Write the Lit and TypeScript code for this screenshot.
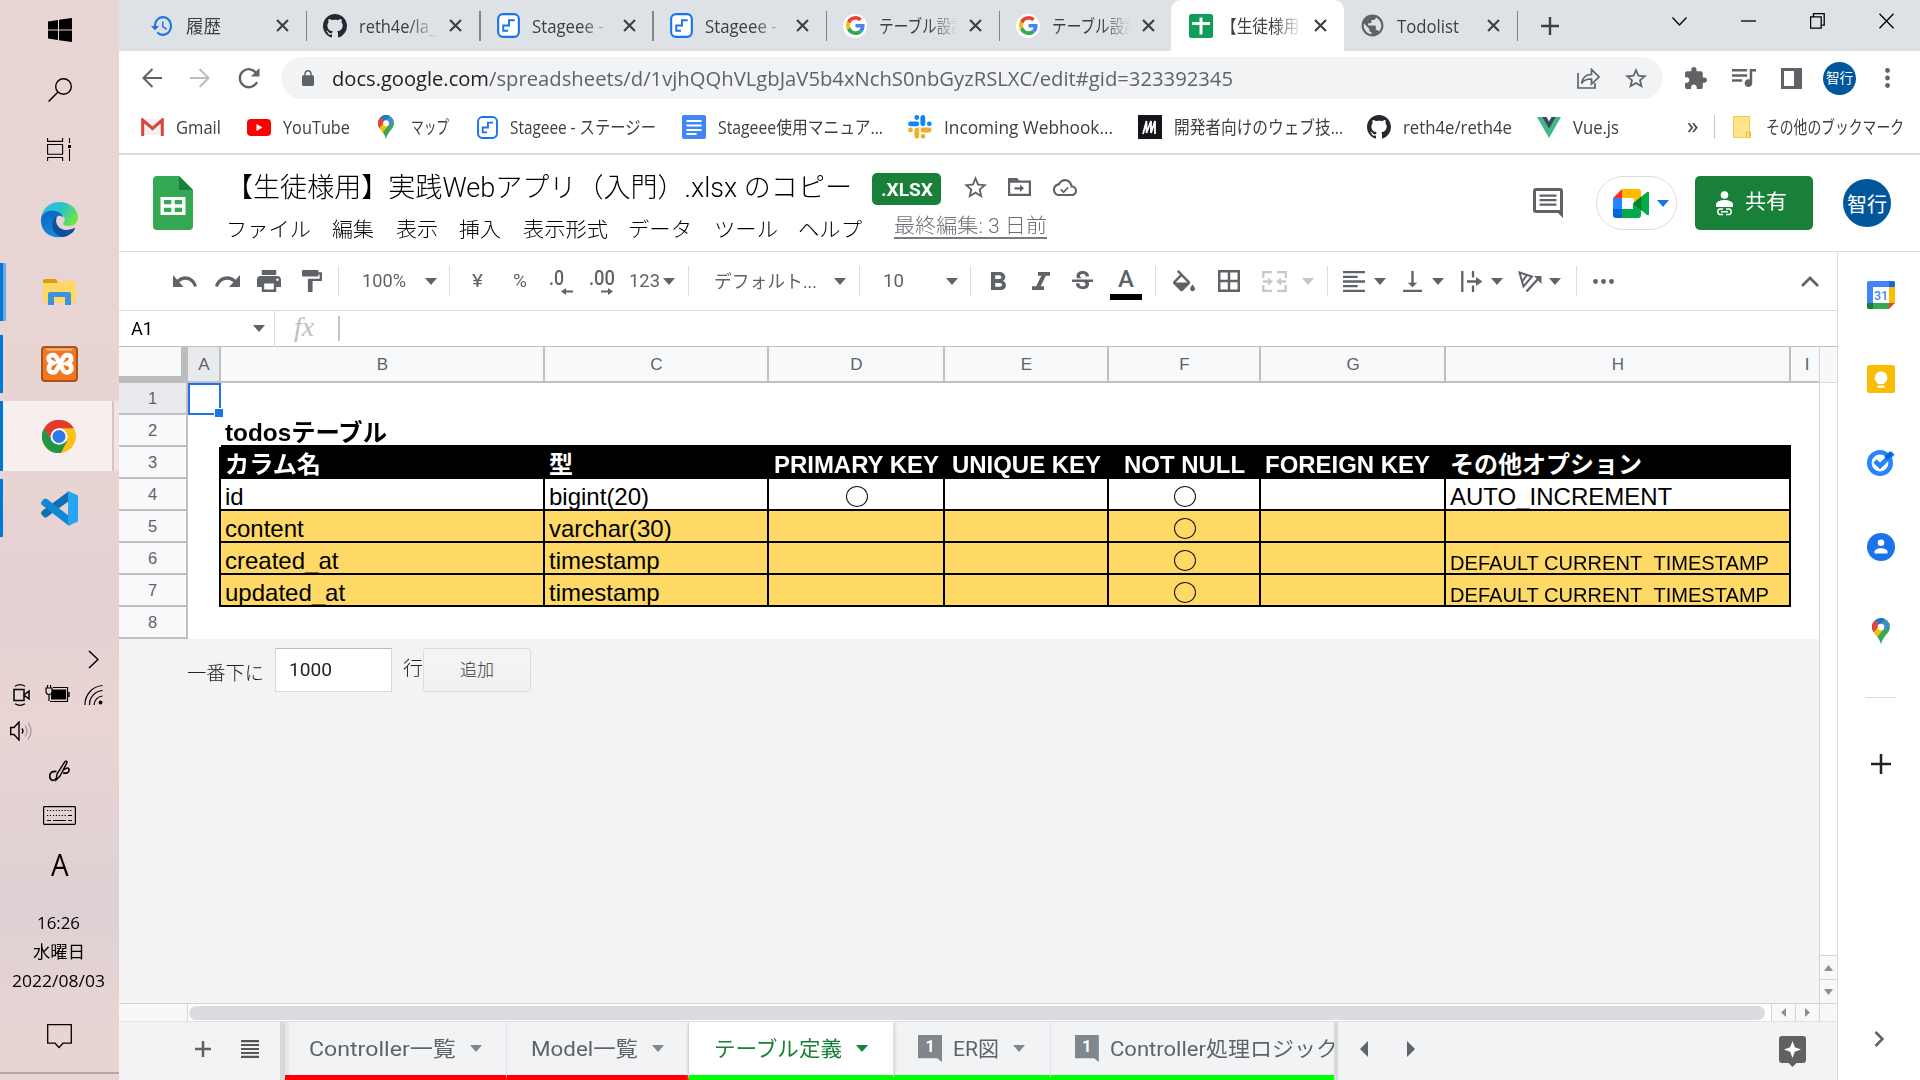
import { LitElement, html, css, nothing } from "lit";
import { customElement, property } from "lit/decorators.js";
import { styleMap } from "lit/directives/style-map.js";
import { unsafeSVG } from "lit/directives/unsafe-svg.js";

/* Text that is condensed or widened to occupy exactly `w` pixels. */
@customElement("fit-text")
class FitText extends LitElement {
  @property({ type: Number }) w = 0;
  static styles = css`
    :host { display: inline-block; white-space: pre; }
    .t { display: inline-block; transform-origin: 0 50%; }
  `;
  render() {
    return html`<span class="t"><slot></slot></span>`;
  }
  firstUpdated() {
    const t = this.renderRoot.querySelector(".t") as HTMLElement;
    const n = t.offsetWidth ? t.getBoundingClientRect().width : 0;
    if (this.w && n) {
      this.style.width = this.w + "px";
      t.style.transform = `scaleX(${this.w / n})`;
    }
  }
}

const fit = (w: number, text: string, cls = "") => html`<fit-text .w=${w} class=${cls}>${text}</fit-text>`;

const icon = (w: number, h: number, box: string, body: string, cls = "") =>
  html`<svg class=${"i " + cls} width=${w} height=${h} viewBox=${box} preserveAspectRatio="none">${unsafeSVG(body)}</svg>`;
const path = (w: number, h: number, box: string, d: string, cls = "") => icon(w, h, box, `<path d="${d}"/>`, cls);

type Item = [number, unknown, string?];

/* Flow items along one axis; each slot reaches up to where the next one starts. */
const flow = (start: number, items: Item[], axis: "width" | "height" = "width") => html`
  <div class="slot" style=${styleMap({ [axis]: items[0][0] - start + "px" })}></div>
  ${items.map(([at, body, cls], n) => html`<div class=${"slot " + (cls ?? "")}
    style=${n + 1 < items.length ? styleMap({ [axis]: items[n + 1][0] - at + "px" }) : nothing}>${body}</div>`)}
`;

const P = {
  undo: "M12.5 8c-2.65 0-5.05.99-6.9 2.6L2 7v9h9l-3.62-3.62c1.39-1.16 3.16-1.88 5.12-1.88 3.54 0 6.55 2.31 7.6 5.5l2.37-.78C21.08 11.03 17.15 8 12.5 8z",
  redo: "M18.4 10.6C16.55 8.99 14.15 8 11.5 8c-4.65 0-8.58 3.03-9.96 7.22L3.9 16c1.05-3.19 4.05-5.5 7.6-5.5 1.95 0 3.73.72 5.12 1.88L13 16h9V7l-3.6 3.6z",
  print: "M19 8H5c-1.66 0-3 1.34-3 3v6h4v4h12v-4h4v-6c0-1.66-1.34-3-3-3zm-3 11H8v-5h8v5zm3-7c-.55 0-1-.45-1-1s.45-1 1-1 1 .45 1 1-.45 1-1 1zm-1-9H6v4h12V3z",
  paint: "M18 4V3c0-.55-.45-1-1-1H5c-.55 0-1 .45-1 1v4c0 .55.45 1 1 1h12c.55 0 1-.45 1-1V6h1v4H9v11c0 .55.45 1 1 1h2c.55 0 1-.45 1-1v-9h8V4h-3z",
  bold: "M15.6 10.79c.97-.67 1.65-1.77 1.65-2.79 0-2.26-1.75-4-4-4H7v14h7.04c2.09 0 3.71-1.7 3.71-3.79 0-1.52-.86-2.82-2.15-3.42zM10 6.5h3c.83 0 1.5.67 1.5 1.5s-.67 1.5-1.5 1.5h-3v-3zm3.5 9H10v-3h3.5c.83 0 1.5.67 1.5 1.5s-.67 1.5-1.5 1.5z",
  italic: "M10 4v3h2.21l-3.42 8H6v3h8v-3h-2.21l3.42-8H18V4z",
  strike: "M7.24 8.75c-.26-.48-.39-1.03-.39-1.67 0-.61.13-1.16.4-1.67.26-.5.63-.93 1.11-1.29.48-.35 1.05-.63 1.7-.83.66-.19 1.39-.29 2.18-.29.81 0 1.54.11 2.21.34.66.22 1.23.54 1.69.94.47.4.83.88 1.08 1.43s.38 1.15.38 1.81h-3.01c0-.31-.05-.59-.15-.85-.09-.27-.24-.49-.44-.68-.2-.19-.45-.33-.75-.44-.3-.1-.66-.16-1.06-.16-.39 0-.74.04-1.03.13s-.53.21-.72.36c-.19.16-.34.34-.44.55-.1.21-.15.43-.15.66 0 .48.25.88.74 1.21.38.25.77.48 1.41.7H7.39c-.05-.08-.11-.17-.15-.25zM21 12v-2H3v2h9.62c.18.07.4.14.55.2.37.17.66.34.87.51s.35.36.43.57c.07.2.11.43.11.69 0 .23-.05.45-.14.66-.09.2-.23.38-.42.53-.19.15-.42.26-.71.35-.29.08-.63.13-1.01.13-.43 0-.83-.04-1.18-.13s-.66-.23-.91-.42c-.25-.19-.45-.44-.59-.75s-.25-.76-.25-1.21H6.4c0 .55.08 1.13.24 1.58s.37.85.65 1.21c.28.35.6.66.98.92.37.26.78.48 1.22.65.44.17.9.3 1.38.39.48.08.96.13 1.44.13.8 0 1.53-.09 2.18-.28s1.21-.45 1.67-.79c.46-.34.82-.77 1.07-1.27s.38-1.07.38-1.71c0-.6-.1-1.14-.31-1.61-.05-.11-.11-.23-.17-.33H21V12z",
  fill: "M16.56 8.94L7.62 0 6.21 1.41l2.38 2.38-5.15 5.15c-.59.59-.59 1.54 0 2.12l5.5 5.5c.29.29.68.44 1.06.44s.77-.15 1.06-.44l5.5-5.5c.59-.58.59-1.53 0-2.12zM5.2 10L10 5.2 14.8 10zM19 11.5s-2 2.17-2 3.5c0 1.1.9 2 2 2s2-.9 2-2c0-1.33-2-3.5-2-3.5z",
  borders: "M3 3v18h18V3H3zm8 16H5v-6h6v6zm0-8H5V5h6v6zm8 8h-6v-6h6v6zm0-8h-6V5h6v6z",
  left: "M15 15H3v2h12v-2zm0-8H3v2h12V7zM3 13h18v-2H3v2zm0 8h18v-2H3v2zM3 3v2h18V3H3z",
  bottom: "M16 13h-3V3h-2v10H8l4 4 4-4zM4 19v2h16v-2H4z",
  star: "M22 9.24l-7.19-.62L12 2 9.19 8.63 2 9.24l5.46 4.73L5.82 21 12 17.27 18.18 21l-1.63-7.03L22 9.24zM12 15.4l-3.76 2.27 1-4.28-3.32-2.88 4.38-.38L12 6.1l1.71 4.04 4.38.38-3.32 2.88 1 4.28L12 15.4z",
  puzzle: "M20.5 11H19V7c0-1.1-.9-2-2-2h-4V3.5C13 2.12 11.88 1 10.5 1S8 2.12 8 3.5V5H4c-1.1 0-1.99.9-1.99 2v3.8H3.5c1.49 0 2.7 1.21 2.7 2.7s-1.21 2.7-2.7 2.7H2V20c0 1.1.9 2 2 2h3.8v-1.5c0-1.49 1.21-2.7 2.7-2.7 1.49 0 2.7 1.21 2.7 2.7V22H17c1.1 0 2-.9 2-2v-4h1.5c1.38 0 2.5-1.12 2.5-2.5S21.88 11 20.5 11z",
  queue: "M15 6H3v2h12V6zm0 4H3v2h12v-2zM3 16h8v-2H3v2zM17 6v8.18c-.31-.11-.65-.18-1-.18-1.66 0-3 1.34-3 3s1.34 3 3 3 3-1.34 3-3V8h3V6h-5z",
  lock: "M18 8h-1V6c0-2.76-2.24-5-5-5S7 3.24 7 6v2H6c-1.1 0-2 .9-2 2v10c0 1.1.9 2 2 2h12c1.1 0 2-.9 2-2V10c0-1.1-.9-2-2-2zM15 8H9V6c0-1.7 1.3-3 3-3s3 1.3 3 3z",
  globe: "M12 2C6.48 2 2 6.48 2 12s4.48 10 10 10 10-4.48 10-10S17.52 2 12 2zm-1 17.93c-3.95-.49-7-3.85-7-7.93 0-.62.08-1.21.21-1.79L9 15v1c0 1.1.9 2 2 2v1.93zm6.9-2.54c-.26-.81-1-1.39-1.9-1.39h-1v-3c0-.55-.45-1-1-1H8v-2h2c.55 0 1-.45 1-1V7h2c1.1 0 2-.9 2-2v-.41c2.93 1.19 5 4.06 5 7.41 0 2.08-.8 3.97-2.1 5.39z",
  github: "M8 0C3.58 0 0 3.58 0 8c0 3.54 2.29 6.53 5.47 7.59.4.07.55-.17.55-.38 0-.19-.01-.82-.01-1.49-2.01.37-2.53-.49-2.69-.94-.09-.23-.48-.94-.82-1.13-.28-.15-.68-.52-.01-.53.63-.01 1.08.58 1.23.82.72 1.21 1.87.87 2.33.66.07-.52.28-.87.51-1.07-1.78-.2-3.64-.89-3.64-3.95 0-.87.31-1.59.82-2.15-.08-.2-.36-1.02.08-2.12 0 0 .67-.21 2.2.82.64-.18 1.32-.27 2-.27.68 0 1.36.09 2 .27 1.53-1.04 2.2-.82 2.2-.82.44 1.1.16 1.92.08 2.12.51.56.82 1.27.82 2.15 0 3.07-1.87 3.75-3.65 3.95.29.25.54.73.54 1.48 0 1.07-.01 1.93-.01 2.2 0 .21.15.46.55.38A8.013 8.013 0 0016 8c0-4.42-3.58-8-8-8z",
  history: "M13 3c-4.97 0-9 4.03-9 9H1l3.89 3.89.07.14L9 12H6c0-3.87 3.13-7 7-7s7 3.13 7 7-3.13 7-7 7c-1.93 0-3.68-.79-4.94-2.06l-1.42 1.42C8.27 19.99 10.51 21 13 21c4.97 0 9-4.03 9-9s-4.03-9-9-9zm-1 5v5l4.28 2.54.72-1.21-3.5-2.08V8H12z",
  cloud: "M19.35 10.04C18.67 6.59 15.64 4 12 4 9.11 4 6.6 5.64 5.35 8.04 2.34 8.36 0 10.91 0 14c0 3.31 2.69 6 6 6h13c2.76 0 5-2.24 5-5 0-2.64-2.05-4.78-4.65-4.96zM19 18H6c-2.21 0-4-1.79-4-4 0-2.05 1.53-3.76 3.56-3.97l1.07-.11.5-.95C8.08 7.14 9.94 6 12 6c2.62 0 4.88 1.86 5.39 4.43l.3 1.5 1.53.11c1.56.1 2.78 1.41 2.78 2.96 0 1.65-1.35 3-3 3zm-8.5-2.6l-2.2-2.2-1.1 1.1 3.3 3.3 5.2-5.2-1.1-1.1z",
};

const caret = (cls = "") => path(12, 7, "0 0 12 7", "M0 0h12L6 7z", cls);
const cross = () => icon(13, 13, "0 0 13 13", `<path d="M1 1l11 11M12 1L1 12" stroke="#3c4043" stroke-width="2.2" fill="none"/>`);
const sep = (cls = "") => html`<div class=${"sep " + cls}></div>`;
const githubMark = () => path(24, 24, "0 0 16 16", P.github, "ink");
const stageee = (s: number) => icon(s, s + 2, "0 0 24 26", `<rect x="1.2" y="1.2" width="21.600" height="23.600" rx="5" fill="#fff" stroke="#1a73e8" stroke-width="2.200"/><path d="M11.500 18.500H6.500V13h6V7.500h6" fill="none" stroke="#1a73e8" stroke-width="2"/>`);
const googleG = () => html`<span class="disc">${icon(19, 19, "0 0 48 48", `<path fill="#EA4335" d="M24 9.5c3.54 0 6.71 1.22 9.21 3.6l6.85-6.85C35.9 2.38 30.47 0 24 0 14.62 0 6.51 5.38 2.56 13.22l7.98 6.19C12.43 13.72 17.74 9.5 24 9.5z"/><path fill="#4285F4" d="M46.98 24.55c0-1.57-.15-3.09-.38-4.55H24v9.02h12.94c-.58 2.96-2.26 5.48-4.78 7.18l7.73 6c4.51-4.18 7.09-10.36 7.09-17.65z"/><path fill="#FBBC05" d="M10.53 28.59c-.48-1.45-.76-2.99-.76-4.59s.27-3.14.76-4.59l-7.98-6.19C.92 16.46 0 20.12 0 24c0 3.88.92 7.54 2.56 10.78l7.97-6.19z"/><path fill="#34A853" d="M24 48c6.48 0 11.93-2.13 15.89-5.81l-7.73-6c-2.15 1.45-4.92 2.3-8.16 2.3-6.26 0-11.57-4.22-13.47-9.91l-7.98 6.19C6.51 42.62 14.62 48 24 48z"/>`)}</span>`;
const mapPin = (w: number, h: number, id: string) => icon(w, h, "0 0 18 26", `<clipPath id="${id}"><path d="M9 0a9 9 0 0 0-9 9c0 6 6.500 8 9 17C11.500 17 18 15 18 9a9 9 0 0 0-9-9z"/></clipPath><g clip-path="url(#${id})"><rect width="18" height="26" fill="#34a853"/><path d="M0 16L18-5v-4H0z" fill="#1a73e8"/><path d="M9 9l10-12v8l-7 8z" fill="#4285f4"/><path d="M-1 3l4-1 5 5-8 9z" fill="#ea4335"/><path d="M1 15l7-8 4 4-8 9.500z" fill="#fbbc04"/></g><circle cx="9" cy="9" r="3.300" fill="#fff"/>`);

@customElement("task-bar")
class TaskBar extends LitElement {
  static styles = css`
    :host { display: flex; flex: none; flex-direction: column; width: 119px; height: 1080px; box-sizing: border-box;
      background: linear-gradient(180deg, #ead5d5 0%, #e9d4d4 45%, #e5d1d2 55%, #ead4d4 67%, #ddd1d3 84%, #e9d4d4 95%);
      font-family: "Open Sans", "Noto Sans CJK JP", sans-serif; font-size: 17px; color: #000; }
    .slot { flex: none; display: flex; align-items: flex-start; justify-content: center; width: 119px; }
    .i { display: block; flex: none; }
    .app { position: relative; display: flex; align-items: center; justify-content: center; width: 119px; height: 58px; }
    .on::before { content: ""; position: absolute; left: 0; top: 0; bottom: 0; width: 3px; background: #0078d7; }
    .multi::before { border-right: 3px solid #6cabe0; }
    .active { height: 70px; justify-content: flex-start; background: linear-gradient(90deg, #f7efee 112px, #d9c3c4 112px, #d9c3c4 114px, #f0e4e4 114px); box-sizing: border-box; padding-left: 42px; }
    .end { justify-content: flex-end; padding-right: 20px; box-sizing: border-box; }
    .tray { justify-content: flex-start; padding-left: 13px; gap: 14px; box-sizing: border-box; }
    .start { justify-content: flex-start; padding-left: 10px; box-sizing: border-box; }
    .mode { font-size: 31px; line-height: 38px; font-family: "Open Sans", sans-serif; transform: scaleX(0.9); }
    .foot { border-top: 2px solid #b3a5a7; align-self: stretch; flex: 1; }
    fit-text { line-height: 26px; font-weight: 400; margin-right: 2px; }
  `;
  render() {
    return flow(0, [
      [18, path(24, 24, "0 0 24 24", "M0 3.500L10 2v9.500H0zM11 1.800L24 0v11.500H11zM0 12.500h10V22L0 20.500zM11 12.500h13V24l-13-1.800z")],
      [78, icon(24, 24, "0 0 24 24", `<circle cx="15.500" cy="8.500" r="7.800" fill="none" stroke="#000" stroke-width="1.400"/><path d="M10 14L.6 23.500" stroke="#000" stroke-width="1.500"/>`)],
      [138, icon(25, 23, "0 0 25 23", `<path d="M.6 0v3.400h15V0M.6 6.500h15v9.800H.6zM.6 23v-3.500h15V23M22.500 0v5M22.500 11v12" fill="none" stroke="#000" stroke-width="1.100"/><rect x="21" y="7" width="3" height="3"/>`)],
      [202, icon(37, 36, "0 0 36 36", `<defs><linearGradient id="eg" x1="0" y1="0" x2="1" y2=".5"><stop offset="0" stop-color="#2fb4f0"/><stop offset=".55" stop-color="#2cc3c8"/><stop offset="1" stop-color="#6fe342"/></linearGradient><linearGradient id="eb" x1="0" y1="0" x2=".3" y2="1"><stop offset="0" stop-color="#0c63b8"/><stop offset="1" stop-color="#1288e0"/></linearGradient></defs><path d="M0 17C1 6 9 0 18 0c10 0 18 7 18 15.500 0 5-4 8.500-9 8.500-4 0-6.500-1.500-5-3.500 3-4 0-7.500-5-7.500C9 13 4 18 6 27 2 24 0 21 0 17z" fill="url(#eg)"/><path d="M0 17c1-6 7-8.500 12-8.200 6 .3 10 4 9.800 8.200C22 14 17 12 14 16c-4 6 0 15 8 18.500C9 38-1 29 0 17z" fill="url(#eb)"/><path d="M11 21c.5-4 2.500-6.500 5-7-4 7 2 14.500 9.500 14 3.500-.2 6-2 7.500-2 1 1.500-5 8.500-11 9C15 35 10 28 11 21z" fill="#0f4f9e"/>`)],
      [263, html`<div class="app on multi">${icon(33, 28, "0 0 33 28", `<path d="M0 3a2 2 0 0 1 2-2h11l2 4H0z" fill="#dd9f06"/><path d="M0 5h15l2-2h14a2 2 0 0 1 2 2v18a2 2 0 0 1-2 2H2a2 2 0 0 1-2-2z" fill="#ffd766"/><path d="M5 27V16a2 2 0 0 1 2-2h19a2 2 0 0 1 2 2v11h-6v-8H11v8z" fill="#3b93dc"/>`)}</div>`],
      [335, html`<div class="app on">${icon(37, 36, "0 0 37 36", `<rect x="1" y="1" width="35" height="34" rx="3" fill="#f37623" stroke="#a95518" stroke-width="2"/><path d="M4 2.500h29l-3 2H7z" fill="#f9b98a"/><path d="M12 17c-6-2-6-8 0-8 5 0 4 7 7 7s2-7 7-7 6 6 0 8.500c7 2 5 9 0 9-6 0-4-7-7-7s-2 7-7 7-6-7 0-9.500z" fill="none" stroke="#fff" stroke-width="4.600"/>`)}</div>`],
      [401, html`<div class="app on active">${icon(34, 33, "0 0 34 34", `<circle cx="17" cy="17" r="17" fill="#fbc116"/><path d="M17 17L2.200 8.500A17 17 0 0 0 19 33.900L25 22z" fill="#269447"/><path d="M2.200 8.500A17 17 0 0 1 31.800 8.500H17l-7.500 12z" fill="#e23b2e"/><circle cx="17" cy="17" r="8.500" fill="#fff"/><circle cx="17" cy="17" r="6.600" fill="#2f78ea"/>`)}</div>`],
      [479, html`<div class="app on">${icon(37, 35, "0 0 37 35", `<path d="M1 20a3 3 0 0 0 0 4l2 2q1.500 1 3 0L28 10V0z" fill="#0f6fb5"/><path d="M1 14a3 3 0 0 1 0-4l2-2q1.500-1 3 0L28 25v10z" fill="#1189d2"/><path d="M27 0l10 4.500v26L27 35z" fill="#25a5f2"/>`)}</div>`],
      [650, icon(11, 19, "0 0 11 19", `<path d="M1 1l9 8.500L1 18" fill="none" stroke="#000" stroke-width="1.500"/>`), "end"],
      [684, html`
        ${icon(18, 22, "0 0 18 22", `<path d="M1 5.500h10v11H1zM11 11l5-4v8z" fill="none" stroke="#000" stroke-width="1.500"/><path d="M2 2.200q5-3 10 0M2 19.800q5 3 10 0" fill="none" stroke="#000" stroke-width="1.300"/>`)}
        ${icon(25, 20, "0 0 25 20", `<rect x="6" y="5.500" width="15" height="10"/><path d="M8 3.500h14.500v14H5" fill="none" stroke="#000" stroke-width="1.200"/><rect x="23.200" y="8" width="1.500" height="5"/><path d="M1 4v3.500a3 3 0 0 0 6 0V4zM2.500 1v3M5.500 1v3M4 10.500V17" fill="#ead5d5" stroke="#000" stroke-width="1.200"/>`)}
        ${icon(19, 22, "0 0 19 22", `<path d="M1 21A19 19 0 0 1 18.500 1.500M5.500 21A14 14 0 0 1 18.500 6.500M10 21A9.500 9.500 0 0 1 18.500 12" fill="none" stroke="#000" stroke-width="1.200"/><circle cx="16.500" cy="18.500" r="1.900"/>`)}`, "tray"],
      [721, icon(22, 20, "0 0 22 20", `<path d="M.7 6.500H4L9 1v18L4 13.500H.7z" fill="none" stroke="#000" stroke-width="1.400"/><path d="M12 7.500q2 2.500 0 5" fill="none" stroke="#000" stroke-width="1.300"/><path d="M15 4.500q4 5.500 0 11M18 1.500q6 8.500 0 17" fill="none" stroke="#a89a9c" stroke-width="1.300"/>`), "start"],
      [760, icon(22, 22, "0 0 22 22", `<path d="M8 18q-4 4-6.500 1c-2-4 0-8.500 6-7.500M14 10q6-4 6 0t-6 3" fill="none" stroke="#000" stroke-width="1.700"/><path d="M7 20l1-6L16 1.500q2-1 2 1L11 16z" fill="#ead5d5" stroke="#000" stroke-width="1.400"/>`)],
      [806, icon(33, 19, "0 0 33 19", `<rect x=".6" y=".6" width="31.800" height="17.800" rx=".8" fill="none" stroke="#000" stroke-width="1.200"/><path d="M4 4.500h25" stroke="#000" stroke-dasharray="1.200 1.700"/><path d="M4 9.500h4M10 9.500h13" stroke="#000" stroke-dasharray="1.200 1.700"/><path d="M25 9.500h4M4 14.500h4M10 14.500h13M25 14.500h4" stroke="#000" stroke-width="1.100"/>`)],
      [845, html`<span class="mode">A</span>`],
      [910, fit(43, "16:26")],
      [939, fit(52, "水曜日")],
      [968, fit(93, "2022/08/03")],
      [1024, icon(25, 25, "0 0 25 25", `<path d="M.7.7h23.600v18.500H16L12 23.500l-4-4.300H.7z" fill="none" stroke="#000" stroke-width="1.300"/>`)],
      [1072, html`<div class="foot"></div>`],
    ], "height");
  }
}

@customElement("browser-chrome")
class BrowserChrome extends LitElement {
  static styles = css`
    :host { display: flex; flex: none; flex-direction: column; height: 155px; box-sizing: border-box; border-bottom: 2px solid #dadce0; background: #fff;
      font-family: "Open Sans", "Noto Sans CJK JP", sans-serif; font-size: 18px; color: #3c4043; }
    .slot { flex: none; display: flex; align-items: center; height: 100%; }
    .i { display: block; flex: none; fill: #5f6368; }
    .ink { fill: #24292f; }
    .blue { fill: #1a73e8; }
    .tabs { display: flex; height: 51px; background: #dee1e6; }
    .tab { display: flex; align-items: center; flex: none; box-sizing: border-box; width: 173.300px; height: 51px; padding-left: 17px; }
    .fav { width: 35.500px; flex: none; display: flex; }
    .label { width: 78px; margin-right: 12.500px; overflow: hidden; flex: none; line-height: 28px; font-weight: 400; -webkit-mask-image: linear-gradient(90deg, #000 64%, transparent); }
    .plain .label { -webkit-mask-image: none; }
    .line { width: 1.500px; height: 30px; background: #80868b; margin-left: auto; margin-right: -1px; flex: none; }
    .tab.current { background: #fff; border-radius: 10px 10px 0 0; margin-left: -2px; padding-left: 18px; }
    .tab.current .fav { width: 32px; }
    .tab.current .label { width: 81px; }
    .first { margin-left: 14px; }
    .disc { display: flex; width: 24px; height: 24px; border-radius: 50%; background: #fff; align-items: center; justify-content: center; }
    .win { height: 42px; }
    .bar { display: flex; height: 54px; align-items: center; }
    .omni { display: flex; align-items: center; width: 1382px; height: 42px; border-radius: 21px; background: #f1f3f4; }
    .url { font-size: 20.500px; line-height: 30px; color: #5f6368; }
    .host { color: #202124; }
    .avatar { display: flex; align-items: center; justify-content: center; width: 33px; height: 33px; border-radius: 50%; background: #01579b; color: #fff; font-size: 13.500px; line-height: 20px; }
    .marks { display: flex; height: 40px; margin-top: 2px; }
    .marks fit-text { line-height: 28px; }
    .sep { width: 1px; height: 24px; background: #c4c7cc; }
    .more { font-size: 23px; line-height: 28px; padding-bottom: 5px; }
  `;
  tab(fav: unknown, label: unknown, cls = "", line = true) {
    return html`<div class=${"tab " + cls}><div class="fav">${fav}</div><div class="label">${label}</div>${cross()}${line ? html`<div class="line"></div>` : nothing}</div>`;
  }
  render() {
    const stroke = (w: number, h: number, d: string, s = 1.3, c = "#000") => icon(w, h, `0 0 ${w} ${h}`, `<path d="${d}" fill="none" stroke="${c}" stroke-width="${s}"/>`);
    return html`
      <div class="tabs">
        ${this.tab(path(23, 22, "0 2 23 20", P.history, "blue"), fit(35, "履歴"), "first")}
        ${this.tab(githubMark(), fit(77, "reth4e/la_"))}
        ${this.tab(stageee(23), fit(76, "Stageee - "))}
        ${this.tab(stageee(23), fit(76, "Stageee - "))}
        ${this.tab(googleG(), fit(87, "テーブル設計"))}
        ${this.tab(googleG(), fit(87, "テーブル設計"), "", false)}
        ${this.tab(icon(24, 24, "0 0 24 24", `<rect width="24" height="24" rx="2.500" fill="#0f9d58"/><path d="M3 9.500h18M12 3.500v17" stroke="#fff" stroke-width="3"/>`), fit(94, "【生徒様用】"), "current", false)}
        ${this.tab(path(23, 23, "1.5 1.5 21 21", P.globe), fit(62, "Todolist"), "plain")}
        ${flow(1517.4, [
          [1541, stroke(18, 18, "M9 0v18M0 9h18", 2.4, "#3c4043")],
          [1672, stroke(15, 9, "M.5.5l7 7.500 7-7.500"), "win"],
          [1741, stroke(15, 2, "M0 1h15"), "win"],
          [1810, stroke(15, 16, "M.6 3.800h10.600v11.400H.6zM3.500 3.800V.7h10.700v11.400h-3"), "win"],
          [1879, stroke(15, 16, "M.5.8l14 14.500M14.500.8l-14 14.500"), "win"],
        ])}
      </div>
      <div class="bar">
        ${flow(119, [
          [142, stroke(20, 20, "M20 10H2M10.500 1L1.500 10l9 9", 2.1, "#5f6368")],
          [190, stroke(20, 20, "M0 10h18M9.500 1l9 9-9 9", 2.1, "#babcbe")],
          [238, icon(22, 21, "0 0 22 21", `<path d="M18.500 5.500A9 9 0 1 0 19 14" fill="none" stroke="#5f6368" stroke-width="2.300"/><path d="M21.500 0v8.500H13z"/>`)],
          [281, html`<div class="omni">${flow(281, [
            [302, path(12, 16, "4 1 16 21", P.lock)],
            [332, html`<span class="url host">${fit(157, "docs.google.com")}</span><span class="url">${fit(744, "/spreadsheets/d/1vjhQQhVLgbJaV5b4xNchS0nbGyzRSLXC/edit#gid=323392345")}</span>`],
            [1577, stroke(23, 21, "M1 5v15h17v-5M4.500 15.500c1-6 4-9 10-9V1.500L22 9l-7.500 7v-5c-5 0-8 1-10 4.500z", 1.7, "#5f6368")],
            [1625, path(22, 20, "2 2 20 19", P.star)],
          ])}</div>`],
          [1685, path(22, 22, "2 1 21 21", P.puzzle)],
          [1732, path(24, 18, "3 6 19 14", P.queue)],
          [1781, icon(21, 21, "0 0 21 21", `<path d="M0 0h21v21H0zM3 3v15h10V3z" fill-rule="evenodd"/>`)],
          [1823, html`<div class="avatar">智行</div>`],
          [1885, icon(5, 20, "0 0 5 20", `<circle cx="2.500" cy="2.500" r="2.400"/><circle cx="2.500" cy="10" r="2.400"/><circle cx="2.500" cy="17.500" r="2.400"/>`)],
        ])}
      </div>
      <div class="marks">
        ${flow(119, [
          [141, icon(23, 18, "0 0 23 18", `<rect x="1" y="1" width="21" height="16" fill="#f1f1f1"/><path d="M1.700 18V2l9.800 8.500L21.300 2v16" fill="none" stroke="#d9453b" stroke-width="3"/>`)],
          [176, fit(45, "Gmail")],
          [247, icon(24, 17, "0 0 24 17", `<rect width="24" height="17" rx="4" fill="#f00"/><path d="M9.500 5v7l6-3.500z" fill="#fff"/>`)],
          [283, fit(67, "YouTube")],
          [378, mapPin(16, 24, "pinA")],
          [411, fit(38, "マップ")],
          [477, stageee(21)],
          [510, fit(146, "Stageee - ステージー")],
          [682, icon(24, 24, "0 0 24 24", `<rect width="24" height="24" rx="2" fill="#4285f4"/><path d="M4.500 6h15M4.500 10.500h15M4.500 15h15M4.500 19h10" stroke="#fff" stroke-width="2"/>`)],
          [718, fit(165, "Stageee使用マニュア...")],
          [908, icon(24, 24, "0 0 24 24", `<g stroke-width="4.800" stroke-linecap="round"><path d="M8.800 2.500v0M2.500 8.800h6.300M14.800 2.500v6.300M21.300 8.800v0" stroke="#0a84ff"/><path d="M2.500 15v0M8.800 15v6.300M15 15h6.300M15 21.300v0" stroke="#ecb02e"/></g>`)],
          [944, fit(169, "Incoming Webhook...")],
          [1138, icon(24, 24, "0 0 24 24", `<rect width="24" height="24" fill="#15141a"/><path d="M5 19L8.500 6v12L13 6v12l4-12v13" fill="none" stroke="#fff" stroke-width="1.800"/>`)],
          [1174, fit(169, "開発者向けのウェブ技...")],
          [1367, githubMark()],
          [1403, fit(109, "reth4e/reth4e")],
          [1537, icon(24, 21, "0 0 24 21", `<path d="M0 0h5l7 12 7-12h5L12 21z" fill="#41b883"/><path d="M5 0h4.500L12 4.500 14.500 0H19l-7 12z" fill="#35495e"/>`)],
          [1573, fit(46, "Vue.js")],
          [1687, html`<span class="more">»</span>`],
          [1714, sep()],
          [1732, icon(19, 22, "0 0 19 22", `<path d="M1.500.5h16v14l1 1.500v5.500h-17z" fill="#ffe48d" stroke="#f0c948"/><path d="M14.500 21v-5h3v5" fill="#ffe48d" stroke="#edc133"/>`)],
          [1766, fit(138, "その他のブックマーク")],
        ])}
      </div>
    `;
  }
}

const columns: [string, number][] = [["A", 33], ["B", 324], ["C", 224], ["D", 176], ["E", 164], ["F", 152], ["G", 185], ["H", 345]];
const heads = ["カラム名", "型", "PRIMARY KEY", "UNIQUE KEY", "NOT NULL", "FOREIGN KEY", "その他オプション"];
const headWidths = [96, 24, 165, 149, 121, 165, 192];
const body = [
  ["id", "bigint(20)", "○", "", "○", "", "AUTO_INCREMENT"],
  ["content", "varchar(30)", "", "", "○", "", ""],
  ["created_at", "timestamp", "", "", "○", "", "DEFAULT CURRENT_TIMESTAMP"],
  ["updated_at", "timestamp", "", "", "○", "", "DEFAULT CURRENT_TIMESTAMP"],
];

@customElement("sheet-grid")
class SheetGrid extends LitElement {
  static styles = css`
    :host { display: flex; flex: none; flex-direction: column; height: 292px; background: #fff; font-family: "Liberation Sans", "Noto Sans CJK JP", sans-serif; color: #000; }
    .row { display: flex; height: 32px; flex: none; }
    .row > div { box-sizing: border-box; flex: none; }
    .top { height: 36px; }
    .corner { width: 69px; border-right: 7px solid #bdbdbd; border-bottom: 7px solid #bdbdbd; background: #f8f9fa; }
    .col { display: flex; align-items: center; justify-content: center; border-right: 2px solid #c0c0c0; border-bottom: 2px solid #c0c0c0; background: #f8f9fb; color: #5f6368; font-size: 17px; padding-left: 1px; padding-top: 2px; }
    .sel { background: #e8eaed; }
    .row > .lastcol { flex: 1; border-right: 0; padding-left: 4px; }
    .num { width: 69px; display: flex; align-items: center; justify-content: center; border-right: 2px solid #c0c0c0; border-bottom: 2px solid #c0c0c0; background: #f8f9fb; color: #5f6368; font-size: 16.500px; }
    .num.sel { background: #e8eaed; }
    .cell { position: relative; display: flex; align-items: flex-end; font-size: 24px; line-height: 25px; white-space: nowrap; padding-left: 4px; }
    .line { border-bottom: 2px solid #000; }
    .edge { border-right: 2px solid #000; }
    .black { background: #000; color: #fff; font-weight: 700; border-right: 2px solid #000; border-bottom: 2px solid #000; }
    .cream { background: #ffd966; }
    .mid { justify-content: center; padding-left: 1px; }
    .small { font-size: 20.800px; line-height: 20px; }
    .ring { width: 20px; height: 19px; border: 1px solid #111; border-radius: 50%; margin-bottom: 2px; }
    .cursor { position: absolute; left: 0; top: 0; width: 33px; height: 32px; box-sizing: border-box; border: 2px solid #1a73e8; }
    .cursor::after { content: ""; position: absolute; right: -5px; bottom: -5px; width: 8px; height: 8px; background: #1a73e8; border: 1px solid #fff; }
    .bold { font-weight: 700; }
  `;
  widths(n: number) { return styleMap({ width: columns[n][1] + "px" }); }
  render() {
    return html`
      <div class="row top">
        <div class="corner"></div>
        ${columns.map(([name], n) => html`<div class=${"col" + (n ? "" : " sel")} style=${this.widths(n)}>${name}</div>`)}
        <div class="col lastcol">I</div>
      </div>
      ${[1, 2, 3, 4, 5, 6, 7, 8].map((r) => html`
        <div class="row">
          <div class=${"num" + (r === 1 ? " sel" : "")}>${r}</div>
          ${columns.map((_, n) => this.cell(r, n))}
        </div>`)}
    `;
  }
  cell(r: number, n: number) {
    const st = this.widths(n);
    if (n === 0) return html`<div class=${"cell" + (r > 2 && r < 8 ? " edge" : "")} style=${st}>${r === 1 ? html`<div class="cursor"></div>` : nothing}</div>`;
    if (r === 2) return html`<div class="cell line bold" style=${st}>${n === 1 ? fit(162, "todosテーブル") : nothing}</div>`;
    if (r === 3) return html`<div class=${"cell black" + (n > 2 && n < 6 ? " mid" : "")} style=${st}>${fit(headWidths[n - 1], heads[n - 1])}</div>`;
    if (r > 3 && r < 8) {
      const t = body[r - 4][n - 1];
      return html`<div class=${"cell line edge" + (r > 4 ? " cream" : "") + (n > 2 && n < 7 ? " mid" : "") + (t.startsWith("DEF") ? " small" : "")} style=${st}>
        ${t === "○" ? html`<div class="ring"></div>` : t.startsWith("DEF") ? fit(319, t) : html`<span>${t}</span>`}</div>`;
    }
    return html`<div class="cell" style=${st}></div>`;
  }
}

@customElement("app-root")
class AppRoot extends LitElement {
  static styles = css`
    :host { display: flex; width: 1920px; height: 1080px; overflow: hidden; background: #fff; font-family: Roboto, "Noto Sans CJK JP", sans-serif; color: #202124; }
    .slot { flex: none; display: flex; align-items: center; height: 100%; box-sizing: border-box; }
    .i { display: block; flex: none; fill: #5f6368; }
    .main { width: 1801px; flex: none; display: flex; flex-direction: column; }
    .header { height: 97px; flex: none; box-sizing: border-box; display: flex; border-bottom: 1px solid #dadce0; }
    .titles { width: 843px; height: 96px; display: flex; flex-direction: column; }
    .titlerow { display: flex; height: 64px; }
    .menurow { display: flex; height: 22px; }
    .title { font-size: 27px; line-height: 40px; font-weight: 300; color: #000; padding-top: 1px; }
    .menu fit-text { font-size: 20.500px; line-height: 30px; font-weight: 300; color: #000; }
    .menu.edited fit-text { color: #6c7075; line-height: 22px; border-bottom: 2px solid #777b80; margin-bottom: 7px; }
    .badge { display: flex; align-items: center; justify-content: center; width: 69px; height: 32px; border-radius: 5px; background: #188038; color: #fff; font-size: 19px; font-weight: 700; margin-top: 4px; }
    .meet { display: flex; align-items: center; width: 81px; height: 54px; box-sizing: border-box; border: 1px solid #dadce0; border-radius: 27px; padding: 0 8px 0 16px; gap: 8px; }
    .blue { fill: #1a73e8; }
    .share { display: flex; align-items: center; width: 118px; height: 54px; box-sizing: border-box; border-radius: 5px; background: #188038; color: #fff; padding-left: 20px; gap: 11px; font-size: 20.500px; }
    .share fit-text { padding-bottom: 7px; font-weight: 400; }
    .white { fill: #fff; }
    .avatar { display: flex; align-items: center; justify-content: center; width: 48px; height: 48px; border-radius: 50%; background: #01579b; color: #fff; }
    .avatar fit-text { font-size: 20px; }
    .under { display: flex; height: 828px; flex: none; }
    .sheet { width: 1718px; flex: none; display: flex; flex-direction: column; }
    .tools { height: 59px; flex: none; box-sizing: border-box; display: flex; border-bottom: 1px solid #dadce0; color: #5f6368; font-size: 18px; }
    .tools .slot > fit-text { padding-bottom: 2px; }
    .sep { width: 1px; height: 30px; background: #dadce0; }
    .sep.dark { width: 2px; height: 25px; background: #c4c7ca; }
    .sep.full { height: 36px; }
    .pale { fill: #c5c7c9; }
    .dec { display: flex; flex-direction: column; font-size: 20px; font-weight: 500; line-height: 20px; height: 28px; margin-top: 2px; }
    .dec .i { margin-left: 12px; }
    .colour { display: flex; flex-direction: column; align-items: center; width: 32px; gap: 5px; padding-top: 6px; }
    .inkbar { width: 32px; height: 6px; background: #000; }
    .letter { font-size: 24px; font-weight: 500; line-height: 20px; }
    .formula { height: 36px; flex: none; box-sizing: border-box; display: flex; border-bottom: 1px solid #c0c0c0; }
    .name { font-size: 18px; color: #000; }
    .fx { font: italic 28px "Liberation Serif", serif; color: #bdc1c6; padding-bottom: 4px; }
    .view { display: flex; height: 656px; flex: none; }
    .canvas { width: 1700px; flex: none; background: #f3f3f3; display: flex; flex-direction: column; }
    .append { display: flex; height: 62px; font-size: 19px; color: #202124; }
    .append .slot { font-weight: 300; }
    .field { width: 117px; height: 44px; box-sizing: border-box; border: 1px solid #d9d9d9; border-top-color: #b9b9b9; background: #fff; padding-left: 13px; display: flex; align-items: center; font-weight: 400; font-size: 18.500px; }
    .button { width: 108px; height: 44px; box-sizing: border-box; border: 1px solid #dcdcdc; border-radius: 3px; background: linear-gradient(#f5f5f5, #f1f1f1); display: flex; align-items: center; justify-content: center; font-size: 17px; color: #333; padding-bottom: 4px; }
    .append .lift { padding-bottom: 8px; }
    .append .drop { padding-top: 2px; }
    .vbar { width: 18px; box-sizing: border-box; border-left: 1px solid #d5d5d5; display: flex; flex-direction: column; background: #fff; }
    .vhead { height: 35px; background: #f8f8f8; border-bottom: 1px solid #dadada; }
    .vspace { flex: 1; }
    .arrow { height: 23px; background: #f8f8f8; border-top: 1px solid #d5d5d5; display: flex; align-items: center; justify-content: center; }
    .arrow .i, .harrow .i { fill: #8f8f8f; }
    .hbar { display: flex; flex: none; height: 19px; box-sizing: border-box; border-top: 1px solid #d5d5d5; border-bottom: 1px solid #e0e2e5; background: #fff; }
    .hcap { width: 69px; box-sizing: border-box; background: #f8f8f8; border-right: 1px solid #d5d5d5; }
    .hspace { flex: 1; display: flex; align-items: center; }
    .thumb { width: 1576px; height: 14px; margin-left: 1px; border-radius: 7px; background: #dadce0; }
    .harrow { width: 24px; box-sizing: border-box; border-left: 1px solid #d5d5d5; background: #f8f8f8; display: flex; align-items: center; justify-content: center; }
    .hcorner { width: 18px; box-sizing: border-box; border-left: 1px solid #d5d5d5; background: #f8f8f8; }
    .foot { height: 58px; flex: none; display: flex; background: #f1f3f4; }
    .act { padding-bottom: 4px; }
    .edgeA { width: 5px; height: 58px; background: #d8dada; }
    .edgeB { width: 4px; height: 58px; background: #d8dada; }
    .tabs { width: 1049px; height: 58px; display: flex; overflow: hidden; }
    .tab { flex: none; display: flex; box-sizing: border-box; height: 58px; align-items: center; border-bottom: 5px solid #0f0; border-right: 1px solid #e0e2e5; color: #5f6368; }
    .tab fit-text { font-size: 21px; line-height: 30px; font-weight: 400; margin-right: 14px; }
    .tab .i { fill: #80868b; }
    .tab.red { border-bottom-color: #f00; }
    .tab.current { background: #fff; color: #188038; box-shadow: 0 0 4px #bbb; }
    .tab.current .i { fill: #188038; }
    .t1 { width: 222px; padding-left: 24px; background: linear-gradient(90deg, #e6e8e8 4px, transparent 4px); }
    .t2 { width: 182px; padding-left: 24px; }
    .t3 { width: 205px; padding-left: 25px; }
    .t4 { width: 157px; padding-left: 24px; }
    .t5 { width: 300px; padding-left: 24px; }
    .note { width: 24px; height: 27px; margin-right: 11px; display: flex; justify-content: center; background: #80868b; clip-path: polygon(0 0, 100% 0, 100% 100%, 80% 86%, 0 86%); color: #fff; font-size: 16px; line-height: 24px; font-weight: 700; }
    .side { width: 83px; box-sizing: border-box; border-left: 1px solid #dadce0; display: flex; flex-direction: column; background: #fff; }
    .side .slot { width: 85px; height: auto; justify-content: center; align-items: flex-start; }
    .side .inward { padding-right: 3px; }
    .hr { width: 31px; height: 1px; background: #dadce0; }
  `;
  render() {
    return html`<task-bar></task-bar>
      <div class="main">
        <browser-chrome></browser-chrome>
        ${this.header()}
        <div class="under">
          <div class="sheet">
            ${this.tools()}
            <div class="formula">${flow(119, [
              [131, fit(22, "A1", "name")],
              [253, caret()],
              [274, sep("full")],
              [294, html`<span class="fx">fx</span>`],
              [338, sep("dark")],
            ])}</div>
            <div class="view">
              <div class="canvas">
                <sheet-grid></sheet-grid>
                <div class="append">${flow(119, [
                  [187, fit(77, "一番下に"), "drop"],
                  [275, html`<div class="field">${fit(43, "1000")}</div>`],
                  [403, fit(20, "行"), "lift"],
                  [423, html`<div class="button">${fit(34, "追加")}</div>`],
                ])}</div>
              </div>
              <div class="vbar"><div class="vhead"></div><div class="vspace"></div>
                <div class="arrow">${path(9, 6, "0 0 9 6", "M0 6h9L4.500 0z")}</div>
                <div class="arrow">${path(9, 6, "0 0 9 6", "M0 0h9L4.500 6z")}</div></div>
            </div>
            <div class="hbar"><div class="hcap"></div><div class="hspace"><div class="thumb"></div></div>
              <div class="harrow">${path(5, 9, "0 0 5 9", "M5 0v9L0 4.500z")}</div>
              <div class="harrow">${path(5, 9, "0 0 5 9", "M0 0v9l5-4.500z")}</div><div class="hcorner"></div></div>
            ${this.foot()}
          </div>
          ${this.side()}
        </div>
      </div>`;
  }
  header() {
    return html`<div class="header">
      ${flow(119, [
        [153, icon(40, 54, "0 0 40 54", `<path d="M4 0h22l14 14v36a4 4 0 0 1-4 4H4a4 4 0 0 1-4-4V4a4 4 0 0 1 4-4z" fill="#34a853"/><path d="M26 0l14 14H26z" fill="#188038"/><path d="M7.500 21h25v18h-25zM11 24v4.300h7.300V24zM21.700 24v4.300H29V24zM11 31.700V36h7.300v-4.300zM21.700 31.700V36H29v-4.300z" fill="#fff" fill-rule="evenodd"/>`)],
        [226, html`<div class="titles">
          <div class="titlerow">${flow(226, [
            [226, fit(626, "【生徒様用】実践Webアプリ（入門）.xlsx のコピー", "title")],
            [872, html`<div class="badge">${fit(52, ".XLSX")}</div>`],
            [964, path(23, 22, "2 2 20 19", P.star)],
            [1008, icon(23, 18, "0 0 23 18", `<path d="M0 0h9l2.300 2.500H23V18H0zM2.200 4.700v11h18.600v-11z" fill-rule="evenodd"/><path d="M6.500 9.200h5.500V6.500l4 3.800-4 3.800v-2.700H6.500z"/>`)],
            [1053, path(24, 17, "0 4 24 16", P.cloud)],
          ])}</div>
          <div class="menurow">${flow(226, ([
            [226, 85, "ファイル"], [332, 42, "編集"], [396, 42, "表示"], [459, 42, "挿入"], [523, 85, "表示形式"], [628, 64, "データ"], [714, 64, "ツール"], [798, 64, "ヘルプ"], [894, 153, "最終編集: 3 日前"],
          ] as [number, number, string][]).map(([at, w, t]): Item => [at, fit(w, t), "menu" + (at === 894 ? " edited" : "")]))}</div>
        </div>`],
        [1533, icon(30, 30, "0 0 30 30", `<path d="M3 0h24a3 3 0 0 1 3 3v27l-5-5H3a3 3 0 0 1-3-3V3a3 3 0 0 1 3-3zM3 3v19h24V3z" fill-rule="evenodd"/><path d="M6.500 6.500h17v2.300h-17zM6.500 11h17v2.300h-17zM6.500 15.500h17v2.300h-17z"/>`)],
        [1596, html`<div class="meet">${icon(36, 29, "0 0 36 29", `<path d="M9 0h16a3 3 0 0 1 3 3v8l-7 3V9H9z" fill="#ffba00"/><path d="M9 0v9H0z" fill="#ff2d25"/><path d="M0 9h9v11H0z" fill="#2684fc"/><path d="M0 20h9v9H3a3 3 0 0 1-3-3z" fill="#0066da"/><path d="M9 20h11v-5h8v11a3 3 0 0 1-3 3H9z" fill="#00ac47"/><path d="M20 14.500L34 3q2-1 2 1v21q0 2-2 1z" fill="#00ac47"/><path d="M20 14.500L28.500 7.500v14z" fill="#00832d"/>`)}${caret("blue")}</div>`],
        [1695, html`<div class="share">${icon(19, 25, "0 0 19 25", `<circle cx="9.500" cy="4" r="3.800"/><path d="M1 16v-2.500c0-6 17-6 17 0V16z"/><path d="M8 18H4.500a3 3 0 0 0 0 5.500H8M11 18h3.500a3 3 0 0 1 0 5.500H11M6 20.800h7" fill="none" stroke="#fff" stroke-width="1.500"/>`, "white")}${fit(42, "共有")}</div>`],
        [1843, html`<div class="avatar">${fit(40, "智行")}</div>`],
      ])}
    </div>`;
  }
  tools() {
    const dec = (t: string, w: number, d: string) => html`<div class="dec">${fit(w, t)}${path(12, 7, "0 0 12 7", d)}</div>`;
    return html`<div class="tools">${flow(119, [
      [173, path(24, 12, "2 7 20.5 9", P.undo)],
      [215, path(25, 12, "1.500 7 20.5 9", P.redo)],
      [257, path(24, 22, "2 3 20 18", P.print)],
      [302, path(20, 22, "4 2 17 20", P.paint)],
      [338, sep()],
      [362, fit(44, "100%")],
      [425, caret()],
      [449, sep()],
      [472, fit(11, "¥")],
      [513, fit(14, "%")],
      [549, dec(".0", 15, "M0 3.500L5 0v2.500h7v2H5V7z")],
      [589, dec(".00", 26, "M12 3.500L7 0v2.500H0v2h7V7z")],
      [629, fit(31, "123")],
      [663, caret()],
      [688, sep()],
      [714, fit(103, "デフォルト...")],
      [834, caret()],
      [859, sep()],
      [883, fit(21, "10")],
      [946, caret()],
      [970, sep()],
      [991, path(15, 18, "7 4 10.800 14", P.bold)],
      [1032, path(18, 18, "6 4 12 14", P.italic)],
      [1072, path(21, 20, "3 3 18 16.500", P.strike)],
      [1110, html`<div class="colour"><span class="letter">A</span><div class="inkbar"></div></div>`],
      [1155, sep()],
      [1173, path(22, 22, "3 0 18 17.500", P.fill)],
      [1218, path(22, 22, "3 3 18 18", P.borders)],
      [1262, icon(25, 21, "0 0 25 21", `<path d="M10 1.200H1.300V7M15 1.200h8.700V7M10 19.800H1.300V14M15 19.800h8.700V14M1 10.500h6M24 10.500h-6" fill="none" stroke="#c5c7c9" stroke-width="2.300"/><path d="M6 6.500l5 4-5 4zM19 6.500l-5 4 5 4z" fill="#c5c7c9"/>`)],
      [1302, caret("pale")],
      [1327, sep()],
      [1343, path(22, 21, "3 3 18 18", P.left)],
      [1374, caret()],
      [1403, path(19, 21, "4 3 16 18", P.bottom)],
      [1432, caret()],
      [1461, icon(22, 21, "0 0 22 21", `<path d="M1.300 0v21M12 0v6.500M12 14.500V21M6 10.500h11" fill="none" stroke="#5f6368" stroke-width="2.300"/><path d="M15 6l6.500 4.500L15 15z"/>`)],
      [1491, caret()],
      [1518, icon(24, 21, "0 0 24 21", `<path d="M1.500 1.500l12.500 4-8.500 10zM4.500 10l4.500-6" fill="none" stroke="#5f6368" stroke-width="2"/><path d="M8.500 20.500L20 8" stroke="#5f6368" stroke-width="2.300"/><path d="M16 5h7.500v8z"/>`)],
      [1549, caret()],
      [1576, sep()],
      [1593, icon(21, 5, "0 0 21 5", `<circle cx="2.500" cy="2.500" r="2.400"/><circle cx="10.500" cy="2.500" r="2.400"/><circle cx="18.500" cy="2.500" r="2.400"/>`)],
      [1801, icon(18, 11, "0 0 18 11", `<path d="M1 10l8-8 8 8" fill="none" stroke="#5f6368" stroke-width="2.700"/>`)],
    ])}</div>`;
  }
  foot() {
    return html`<div class="foot">${flow(119, [
      [195, icon(16, 16, "0 0 16 16", `<path d="M8 0v16M0 8h16" stroke="#616161" stroke-width="2.500"/>`), "act"],
      [241, icon(18, 18, "0 0 18 18", `<path d="M0 1.200h18M0 5h18M0 9h18M0 13h18M0 16.800h18" stroke="#555" stroke-width="2.200"/>`), "act"],
      [280, html`<div class="edgeA"></div>`],
      [285, html`<div class="tabs">
        <div class="tab red t1">${fit(147, "Controller一覧")}${caret()}</div>
        <div class="tab red t2">${fit(107, "Model一覧")}${caret()}</div>
        <div class="tab current t3">${fit(128, "テーブル定義")}${caret()}</div>
        <div class="tab t4"><div class="note">1</div>${fit(46, "ER図")}${caret()}</div>
        <div class="tab t5"><div class="note">1</div>${fit(228, "Controller処理ロジック")}</div>
      </div>`],
      [1334, html`<div class="edgeB"></div>`],
      [1360, path(8, 16, "0 0 8 16", "M8 0v16L0 8z"), "act"],
      [1407, path(8, 16, "0 0 8 16", "M0 0v16l8-8z"), "act"],
      [1779, icon(27, 31, "0 0 27 31", `<path d="M3 0h21a3 3 0 0 1 3 3v21a3 3 0 0 1-3 3h-6.500l-4 4-4-4H3a3 3 0 0 1-3-3V3a3 3 0 0 1 3-3z" fill="#616161"/><path d="M13.500 5l2.300 6.200L22 13.500l-6.200 2.300-2.300 6.200-2.300-6.200L5 13.500l6.200-2.300z" fill="#fff"/>`)],
    ])}</div>`;
  }
  side() {
    return html`<div class="side">${flow(252, [
      [281, icon(28, 28, "0 0 28 28", `<path d="M2 0h24a2 2 0 0 1 2 2v4H0V2a2 2 0 0 1 2-2z" fill="#4285f4"/><path d="M0 5h6v17H0z" fill="#4285f4"/><path d="M22 0h4a2 2 0 0 1 2 2v4h-6z" fill="#1967d2"/><path d="M22 6h6v16h-6z" fill="#fbbc04"/><path d="M0 22h22v6H2a2 2 0 0 1-2-2z" fill="#34a853"/><path d="M0 22h6v6H2a2 2 0 0 1-2-2z" fill="#188038"/><path d="M22 22h6l-6 6z" fill="#ea4335"/><path d="M6 6h16v16H6z" fill="#fff"/><text x="14" y="18.500" font-family="Roboto" font-weight="500" font-size="12.500" text-anchor="middle" fill="#4285f4">31</text>`)],
      [365, icon(28, 28, "0 0 28 28", `<rect width="28" height="28" rx="2.500" fill="#fbbc04"/><path d="M14 6.500a6.300 6.300 0 0 0-3.500 11.500v1h7v-1A6.300 6.300 0 0 0 14 6.500zM10.500 20.500h7V23h-7z" fill="#fff"/>`)],
      [448, icon(29, 28, "0 0 29 28", `<circle cx="14" cy="15" r="10.700" fill="none" stroke="#2684fc" stroke-width="4.600"/><path d="M9 13l5 5L27 5" fill="none" stroke="#2684fc" stroke-width="4.600"/><path d="M20 10.500l5.500-5.500" stroke="#0066da" stroke-width="4.600"/>`)],
      [533, icon(28, 28, "0 0 28 28", `<circle cx="14" cy="14" r="14" fill="#1a73e8"/><circle cx="14" cy="9.800" r="3.300" fill="#fff"/><path d="M7.500 20.500v-1.500c0-5 13-5 13 0v1.500z" fill="#fff"/>`)],
      [618, mapPin(18, 26, "pinB")],
      [697, html`<div class="hr"></div>`],
      [754, icon(20, 20, "0 0 20 20", `<path d="M10 0v20M0 10h20" stroke="#202124" stroke-width="2.500"/>`)],
      [1031, icon(10, 16, "0 0 10 16", `<path d="M1.500 1l7 7-7 7" fill="none" stroke="#5f6368" stroke-width="2.500"/>`), "inward"],
    ], "height")}</div>`;
  }
}
